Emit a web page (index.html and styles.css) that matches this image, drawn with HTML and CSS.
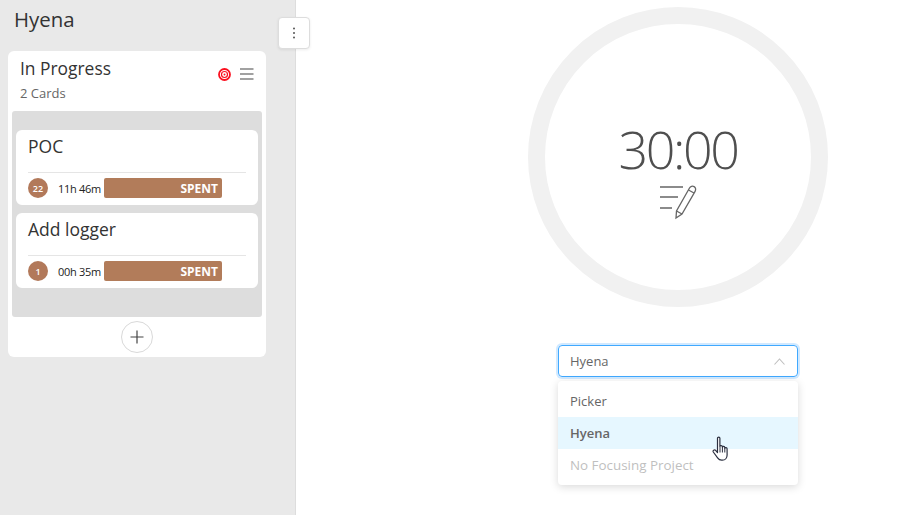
FILE: index.html
```html
<!DOCTYPE html>
<html lang="en">
<head>
    <meta charset="UTF-8">
    <title>Hyena</title>
    <link rel="stylesheet" href="styles.css">
</head>
<body>
    <div class="app">
        <aside class="sidebar">
            <h1 class="project-title">Hyena</h1>
            <button class="kebab-btn">
                <svg width="4" height="12" viewBox="0 0 4 12"><circle cx="2" cy="1.5" r="1" fill="#555"/><circle cx="2" cy="6" r="1" fill="#555"/><circle cx="2" cy="10.5" r="1" fill="#555"/></svg>
            </button>

            <section class="column">
                <div class="column-head">
                    <div>
                        <div class="column-title">In Progress</div>
                        <div class="column-count">2 Cards</div>
                    </div>
                    <div class="column-icons">
                        <svg width="13" height="13" viewBox="0 0 13 13"><circle cx="6.5" cy="6.5" r="5.5" fill="none" stroke="#fb0f1e" stroke-width="1.8"/><circle cx="6.5" cy="6.5" r="3" fill="none" stroke="#fb0f1e" stroke-width="1.2"/><circle cx="6.5" cy="6.5" r="1" fill="#fb0f1e"/></svg>
                        <svg width="14" height="12" viewBox="0 0 14 12"><path d="M0 1h13.5M0 6h13.5M0 11h13.5" stroke="#444" stroke-width="1.2" fill="none"/></svg>
                    </div>
                </div>

                <div class="card-list">
                    <article class="card">
                        <div class="card-title">POC</div>
                        <div class="card-foot">
                            <span class="badge">22</span>
                            <span class="time">11h 46m</span>
                            <span class="spent">SPENT</span>
                        </div>
                    </article>
                    <article class="card">
                        <div class="card-title">Add logger</div>
                        <div class="card-foot">
                            <span class="badge">1</span>
                            <span class="time">00h 35m</span>
                            <span class="spent">SPENT</span>
                        </div>
                    </article>
                </div>

                <div class="column-foot">
                    <button class="add-btn">
                        <svg width="14" height="14" viewBox="0 0 14 14"><path d="M7 0.5v13M0.5 7h13" stroke="#444" stroke-width="1.2" fill="none"/></svg>
                    </button>
                </div>
            </section>
        </aside>

        <main class="main">
            <div class="timer">
                <div class="timer-value">30:00</div>
                <svg class="timer-icon" width="38" height="38" viewBox="0 0 38 38" fill="none" stroke="#666" stroke-width="1.3">
                    <path d="M1 4h23M1 14h18M1 25h12"/>
                    <path d="M17 35l.5-7L30.5 5c1-1.8 3-2.3 4.6-1.4s2 3 1 4.7L23 31z"/>
                    <path d="M17.5 28l5.5 3M29.5 7l5.5 3"/>
                </svg>
            </div>

            <div class="select">
                <div class="select-box">
                    <span>Hyena</span>
                    <svg width="11" height="7" viewBox="0 0 11 7"><path d="M.5 6.5L5.5 1l5 5.5" fill="none" stroke="#bfbfbf" stroke-width="1.1"/></svg>
                </div>
                <ul class="select-menu">
                    <li>Picker</li>
                    <li class="active">Hyena</li>
                    <li class="disabled">No Focusing Project</li>
                </ul>
                <svg class="cursor" width="18" height="26" viewBox="0 0 18 26">
                    <path d="M5.5 2.2c0-1.5 2.4-1.5 2.4 0v8.3c.2-1.3 2.4-1.3 2.5.2v.6c.2-1.2 2.3-1.2 2.4.3v.7c.3-1.1 2.2-1 2.3.4v6.2c0 2.8-1.8 5.3-4.8 5.3H9.6c-2 0-3-.9-4-2.4L1.3 16c-.9-1.6 1-2.8 2.3-1.7l1.9 2.2z" fill="#fff" stroke="#2b3040" stroke-width="1.2" stroke-linejoin="round"/>
                    <path d="M8 11v5.5M10.4 11.5v5M12.8 12.3v4.2" stroke="#2b3040" stroke-width="1" fill="none"/>
                </svg>
            </div>
        </main>
    </div>
</body>
</html>
```

FILE: styles.css
```css
* {
    box-sizing: border-box;
}

html, body {
    height: 100%;
}

body {
    margin: 0;
    font-family: "Open Sans", "Noto Sans", Arial, sans-serif;
    color: #333;
    background: #fff;
    overflow: hidden;
}

.app {
    display: flex;
    height: 515px;
}

/* Sidebar */
.sidebar {
    position: relative;
    width: 296px;
    flex-shrink: 0;
    padding: 7px 29px 0 8px;
    background: #e9e9e9;
    border-right: 1px solid #ddd;
}

.project-title {
    margin: 0 0 16px 6px;
    height: 28px;
    font-size: 20.4px;
    line-height: 25px;
    font-weight: 400;
    color: #333;
}

.kebab-btn {
    position: absolute;
    left: 278px;
    top: 17px;
    width: 32px;
    height: 32px;
    padding: 0;
    display: flex;
    align-items: center;
    justify-content: center;
    background: #fff;
    border: 1px solid #ddd;
    border-radius: 4px;
    box-shadow: 0 1px 3px rgba(0, 0, 0, 0.08);
}

.column {
    width: 258px;
    height: 306px;
    background: #fff;
    border-radius: 6px;
    padding: 0 4px;
}

.column-head {
    display: flex;
    justify-content: space-between;
    height: 60px;
    padding: 5px 8px 0 8px;
}

.column-title {
    font-size: 17.4px;
    line-height: 24px;
    color: #333;
}

.column-count {
    margin-top: 2px;
    font-size: 13px;
    line-height: 22px;
    color: #666;
}

.column-icons {
    display: flex;
    align-items: center;
    gap: 9px;
    height: 24px;
    margin-top: 6px;
}

.card-list {
    height: 206px;
    padding: 19px 4px 0;
    background: #ddd;
    border-radius: 3px;
}

.card {
    height: 75px;
    margin-bottom: 8px;
    padding: 4px 12px 0;
    background: #fff;
    border-radius: 6px;
}

.card-title {
    height: 39px;
    font-size: 17.5px;
    line-height: 25px;
    color: #333;
    border-bottom: 1px solid #e5e5e5;
}

.card-foot {
    display: flex;
    align-items: center;
    margin-top: 5px;
}

.badge {
    width: 20px;
    height: 20px;
    display: flex;
    align-items: center;
    justify-content: center;
    background: #b2795a;
    border-radius: 50%;
    color: #fff;
    font-size: 9px;
    font-weight: 600;
}

.time {
    width: 46px;
    margin-left: 10px;
    font-size: 11px;
    letter-spacing: -0.3px;
    white-space: nowrap;
    color: #222;
}

.spent {
    width: 118px;
    height: 20px;
    padding: 1px 4px 0 0;
    text-align: right;
    background: #b27c5a;
    border-radius: 2px;
    color: #fff;
    font-size: 12px;
    line-height: 20px;
    font-weight: 700;
}

.column-foot {
    display: flex;
    justify-content: center;
    padding-top: 4px;
}

.add-btn {
    width: 32px;
    height: 32px;
    padding: 0;
    display: flex;
    align-items: center;
    justify-content: center;
    background: #fff;
    border: 1px solid #d9d9d9;
    border-radius: 50%;
}

/* Timer side */
.main {
    flex: 1;
    display: flex;
    flex-direction: column;
    align-items: center;
    padding: 7px 0 0 159px;
}

.timer {
    width: 300px;
    height: 300px;
    flex-shrink: 0;
    display: flex;
    flex-direction: column;
    align-items: center;
    border: 17px solid #f1f1f1;
    border-radius: 50%;
    padding-top: 95px;
}

.timer-value {
    font-size: 52px;
    font-weight: 300;
    letter-spacing: -2.4px;
    line-height: 60px;
    color: #4f4f4f;
}

.timer-icon {
    margin-top: 4px;
}

.select {
    position: relative;
    width: 240px;
    margin-top: 38px;
    font-size: 13px;
}

.select-box {
    height: 32px;
    display: flex;
    align-items: center;
    justify-content: space-between;
    padding: 0 12px 0 11px;
    border: 1px solid #40a9ff;
    border-radius: 4px;
    box-shadow: 0 0 0 2px rgba(24, 144, 255, 0.2);
    color: #666;
}

.select-menu {
    list-style: none;
    margin: 4px 0 0;
    padding: 4px 0;
    background: #fff;
    border-radius: 4px;
    box-shadow: 0 2px 8px rgba(0, 0, 0, 0.15);
}

.select-menu li {
    height: 32px;
    padding: 0 12px;
    line-height: 32px;
    color: #666;
}

.select-menu li.active {
    background: #e6f7ff;
    font-weight: 600;
}

.select-menu li.disabled {
    font-size: 13.4px;
    color: #bfbfbf;
}

.cursor {
    position: absolute;
    left: 154px;
    top: 91px;
}
```
